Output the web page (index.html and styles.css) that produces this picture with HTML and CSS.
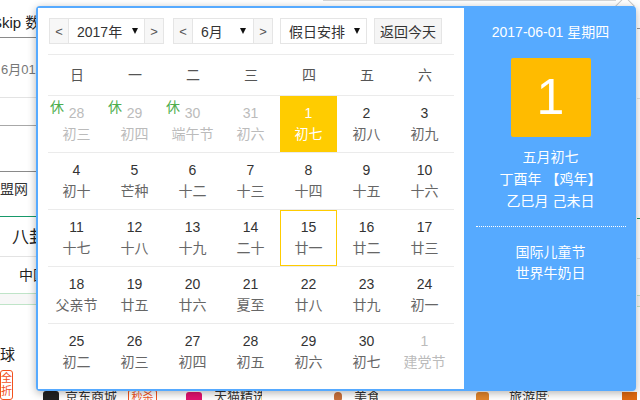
FILE: index.html
```html
<!DOCTYPE html>
<html lang="zh-CN">
<head>
<meta charset="utf-8">
<title>万年历</title>
<link rel="stylesheet" href="styles.css">
</head>
<body>
<div class="page">
  <div class="lcol">
    <div class="l-hd"><span class="skip">Skip 数据</span></div>
    <div class="l-date">6月01日</div>
    <div class="l-g1"></div>
    <div class="l-g2"></div>
    <div class="l-link">盟网</div>
    <div class="l-cat">八卦</div>
    <div class="l-cn">中国</div>
    <div class="band"></div>
    <div class="l-ball">球</div>
    <div class="stamp">全<br>折</div>
  </div>
  <div class="mcol">
    <div class="topline"></div>
    <div class="spacer"></div>
    <div class="bstrip">
      <span class="ico-black"></span>
      <span class="btxt w1">京东商城</span>
      <span class="ms">秒杀</span>
      <span class="ico-pink"></span>
      <span class="btxt w2">天猫精选</span>
      <span class="ico-or"></span>
      <span class="btxt w3">美食</span>
      <span class="ico-or2"></span>
      <span class="btxt w4">旅游度假</span>
      <span class="ico-box"></span>
    </div>
  </div>
  <div class="rcol">
    <div class="r1"></div>
    <div class="r2">猜</div>
    <div class="r3">百</div>
    <div class="r4"></div>
    <div class="r5"></div>
    <div class="band"></div>
    <div class="r6"><span class="dash"></span><span class="redbar"></span></div>
  </div>
</div>

<div class="pointer"></div>

<div class="cal">
  <div class="main">
    <div class="toolbar">
      <div class="spin yr"><span class="arr">&lt;</span><span class="val">2017年<i class="caret"></i></span><span class="arr">&gt;</span></div>
      <div class="spin mo"><span class="arr">&lt;</span><span class="val">6月<i class="caret"></i></span><span class="arr">&gt;</span></div>
      <div class="drop">假日安排<i class="caret"></i></div>
      <div class="btn">返回今天</div>
    </div>
    <div class="grid">
      <div class="wk">日</div><div class="wk">一</div><div class="wk">二</div><div class="wk">三</div><div class="wk">四</div><div class="wk">五</div><div class="wk">六</div>

      <div class="day oth"><span class="rest">休</span><div class="in"><b>28</b><em>初三</em></div></div>
      <div class="day oth"><span class="rest">休</span><div class="in"><b>29</b><em>初四</em></div></div>
      <div class="day oth"><span class="rest">休</span><div class="in"><b>30</b><em>端午节</em></div></div>
      <div class="day oth"><div class="in"><b>31</b><em>初六</em></div></div>
      <div class="day sel"><div class="in"><b>1</b><em>初七</em></div></div>
      <div class="day"><div class="in"><b>2</b><em>初八</em></div></div>
      <div class="day"><div class="in"><b>3</b><em>初九</em></div></div>

      <div class="day"><div class="in"><b>4</b><em>初十</em></div></div>
      <div class="day"><div class="in"><b>5</b><em>芒种</em></div></div>
      <div class="day"><div class="in"><b>6</b><em>十二</em></div></div>
      <div class="day"><div class="in"><b>7</b><em>十三</em></div></div>
      <div class="day"><div class="in"><b>8</b><em>十四</em></div></div>
      <div class="day"><div class="in"><b>9</b><em>十五</em></div></div>
      <div class="day"><div class="in"><b>10</b><em>十六</em></div></div>

      <div class="day"><div class="in"><b>11</b><em>十七</em></div></div>
      <div class="day"><div class="in"><b>12</b><em>十八</em></div></div>
      <div class="day"><div class="in"><b>13</b><em>十九</em></div></div>
      <div class="day"><div class="in"><b>14</b><em>二十</em></div></div>
      <div class="day today"><div class="in"><b>15</b><em>廿一</em></div></div>
      <div class="day"><div class="in"><b>16</b><em>廿二</em></div></div>
      <div class="day"><div class="in"><b>17</b><em>廿三</em></div></div>

      <div class="day"><div class="in"><b>18</b><em>父亲节</em></div></div>
      <div class="day"><div class="in"><b>19</b><em>廿五</em></div></div>
      <div class="day"><div class="in"><b>20</b><em>廿六</em></div></div>
      <div class="day"><div class="in"><b>21</b><em>夏至</em></div></div>
      <div class="day"><div class="in"><b>22</b><em>廿八</em></div></div>
      <div class="day"><div class="in"><b>23</b><em>廿九</em></div></div>
      <div class="day"><div class="in"><b>24</b><em>初一</em></div></div>

      <div class="day"><div class="in"><b>25</b><em>初二</em></div></div>
      <div class="day"><div class="in"><b>26</b><em>初三</em></div></div>
      <div class="day"><div class="in"><b>27</b><em>初四</em></div></div>
      <div class="day"><div class="in"><b>28</b><em>初五</em></div></div>
      <div class="day"><div class="in"><b>29</b><em>初六</em></div></div>
      <div class="day"><div class="in"><b>30</b><em>初七</em></div></div>
      <div class="day oth"><div class="in"><b>1</b><em>建党节</em></div></div>
    </div>
  </div>
  <div class="side">
    <div class="s-date">2017-06-01 星期四</div>
    <div class="s-big">1</div>
    <div class="s-lunar">
      <div>五月初七</div>
      <div>丁酉年 【鸡年】</div>
      <div>乙巳月 己未日</div>
    </div>
    <div class="s-line"></div>
    <div class="s-fest">
      <div>国际儿童节</div>
      <div>世界牛奶日</div>
    </div>
  </div>
</div>
</body>
</html>
```

FILE: styles.css
```css
* { box-sizing: border-box; margin: 0; padding: 0; }

body {
  width: 640px;
  height: 400px;
  overflow: hidden;
  background: #fff;
  position: relative;
  font-family: "Liberation Sans", "Noto Sans CJK SC", sans-serif;
  color: #333;
}

/* ---------- background page ---------- */
.page { display: flex; height: 400px; }

.lcol { width: 36px; flex: none; display: flex; flex-direction: column; white-space: nowrap; }
.mcol { flex: 1; display: flex; flex-direction: column; }
.rcol { width: 12px; flex: none; display: flex; flex-direction: column; white-space: nowrap; overflow: hidden; }

.l-hd { height: 38px; border-bottom: 1px solid #8a8a8a; padding-top: 14px; line-height: 18px; font-size: 15px; color: #222; }
.skip { display: inline-block; margin-left: -8px; }
.l-date { height: 61px; border-bottom: 1px solid #e3e3e3; padding: 23px 0 0 1px; line-height: 18px; font-size: 13px; color: #777; }
.l-g1 { height: 28px; border-bottom: 1px solid #a8a8a8; }
.l-g2 { height: 46px; border-bottom: 1px solid #8a8a8a; }
.l-link { height: 46px; border-bottom: 1px solid #17996a; padding-top: 8px; line-height: 18px; font-size: 14px; color: #333; }
.l-cat { height: 40px; border-bottom: 1px solid #e3e3e3; padding: 11px 0 0 12px; line-height: 20px; font-size: 17px; color: #222; }
.l-cn { height: 36px; padding: 9px 0 0 19px; line-height: 18px; font-size: 14px; color: #222; }
.band { height: 12px; border-top: 1px solid #bfe4c8; border-bottom: 1px solid #bfe4c8; background: #f7f7f7; }
.l-ball { height: 66px; padding-top: 41px; line-height: 18px; font-size: 15px; color: #222; }
.stamp { width: 13px; height: 30px; border: 1px solid #f2521c; border-radius: 3px; color: #f2521c; font-size: 11px; line-height: 13px; text-align: center; padding-top: 1px; }

.r1 { height: 29px; border-bottom: 1px solid #999; }
.r2 { height: 70px; border-bottom: 1px solid #e3e3e3; padding: 33px 0 0 8px; line-height: 18px; font-size: 15px; color: #139a68; }
.r3 { height: 120px; border-bottom: 1px solid #17996a; padding: 46px 0 0 8px; line-height: 18px; font-size: 15px; color: #444; }
.r4 { height: 40px; border-bottom: 1px solid #e3e3e3; }
.r5 { height: 36px; }
.r6 { flex: 1; display: flex; flex-direction: column; padding-left: 8px; }
.dash { width: 4px; height: 1px; background: #333; margin-top: 16px; }
.redbar { width: 4px; height: 10px; background: #8a2a10; margin-top: 18px; }

.topline { margin-left: 287px; width: 293px; border-top: 1px solid #d6d6d6; }
.spacer { flex: 1; }
.bstrip { height: 14px; margin-bottom: -4px; display: flex; align-items: flex-start; padding-left: 7px; font-size: 13px; line-height: 14px; color: #333; }
.ico-black { width: 16px; height: 13px; background: #222; border-radius: 3px; margin-top: 1px; }
.btxt { overflow: hidden; white-space: nowrap; margin-left: 6px; }
.w1 { width: 53px; }
.w2 { width: 48px; margin-left: 12px; }
.w3 { width: 24px; margin-left: 12px; }
.w4 { width: 40px; margin-left: 20px; }
.ms { width: 29px; height: 14px; border: 1px solid #f2521c; border-radius: 2px; color: #f2521c; font-size: 11px; line-height: 12px; text-align: center; margin-left: 10px; }
.ico-pink { width: 16px; height: 12px; background: #e0126e; border-radius: 3px; margin: 2px 0 0 29px; }
.ico-or { width: 8px; height: 10px; background: #c8703a; border-radius: 4px; margin: 2px 0 0 72px; }
.ico-or2 { width: 13px; height: 10px; background: #e0842a; border-radius: 3px; margin: 2px 0 0 98px; }
.ico-box { width: 15px; height: 12px; background: #e06a10; margin: 2px 0 0 73px; }

/* ---------- popup pointer ---------- */
.pointer {
  position: absolute;
  left: 618px;
  top: -1px;
  width: 14px;
  height: 14px;
  background: #fff;
  border: 1px solid #c8c8c8;
  transform: rotate(45deg);
  z-index: 1;
}

/* ---------- calendar popup ---------- */
.cal {
  position: absolute;
  left: 36px;
  top: 6px;
  width: 600px;
  height: 385px;
  border: 2px solid #56aaff;
  border-radius: 4px;
  background: #fff;
  display: flex;
  box-shadow: 0 2px 8px rgba(0, 0, 0, 0.3);
  z-index: 2;
}

.main { width: 426px; flex: none; padding: 10px 10px 0 10px; background: #fff; }

.toolbar { display: flex; height: 26px; margin-left: 1px; font-size: 14px; color: #333; }
.spin { display: flex; height: 26px; border: 1px solid #e5e5e5; }
.mo { margin-left: 9px; }
.arr { width: 19px; background: #f7f7f7; color: #555; font-size: 13px; display: flex; align-items: center; justify-content: center; }
.arr:first-child { border-right: 1px solid #e5e5e5; }
.arr:last-child { border-left: 1px solid #e5e5e5; }
.val { display: flex; align-items: center; justify-content: space-between; padding: 0 6px 0 8px; }
.yr .val { width: 75px; }
.mo .val { width: 60px; padding-right: 7px; }
.caret { display: block; width: 0; height: 0; border-left: 3px solid transparent; border-right: 3px solid transparent; border-top: 6px solid #111; }
.drop { width: 87px; margin-left: 7px; border: 1px solid #e5e5e5; display: flex; align-items: center; justify-content: space-between; padding: 0 6px 0 8px; }
.btn { width: 68px; margin-left: 7px; border: 1px solid #e5e5e5; background: #f5f5f5; display: flex; align-items: center; justify-content: center; }

.grid { display: grid; grid-template-columns: repeat(7, 58px); margin-top: 10px; }
.wk { height: 41px; border-top: 1px solid #ebebeb; line-height: 40px; text-align: center; font-size: 14px; color: #555; }
.day { height: 57px; border-top: 1px solid #ebebeb; position: relative; }
.in { width: 57px; height: 56px; padding-top: 7px; text-align: center; }
.in b { display: block; font-weight: normal; font-size: 14px; line-height: 21px; color: #333; }
.in em { display: block; font-style: normal; font-size: 14px; line-height: 21px; color: #666; }
.oth .in b, .oth .in em { color: #bbb; }
.sel .in { background: #ffcc00; }
.sel .in b, .sel .in em { color: #fff; }
.today .in { border: 1px solid #ffcc00; padding-top: 6px; }
.rest { position: absolute; left: 2px; top: 3px; font-size: 14px; line-height: 16px; color: #4fae4f; z-index: 1; }

.side { flex: 1; background: #56aaff; color: #fff; text-align: center; padding: 14px 0 0 3px; font-size: 14px; }
.s-date { line-height: 20px; }
.s-big { width: 80px; height: 79px; margin: 16px auto 0; background: #ffbb00; border-radius: 2px; font-size: 50px; line-height: 79px; }
.s-lunar { margin-top: 9px; line-height: 22px; }
.s-line { margin: 14px 8px 0 9px; border-top: 1px dotted #fff; }
.s-fest { margin-top: 15px; line-height: 21px; }
```
